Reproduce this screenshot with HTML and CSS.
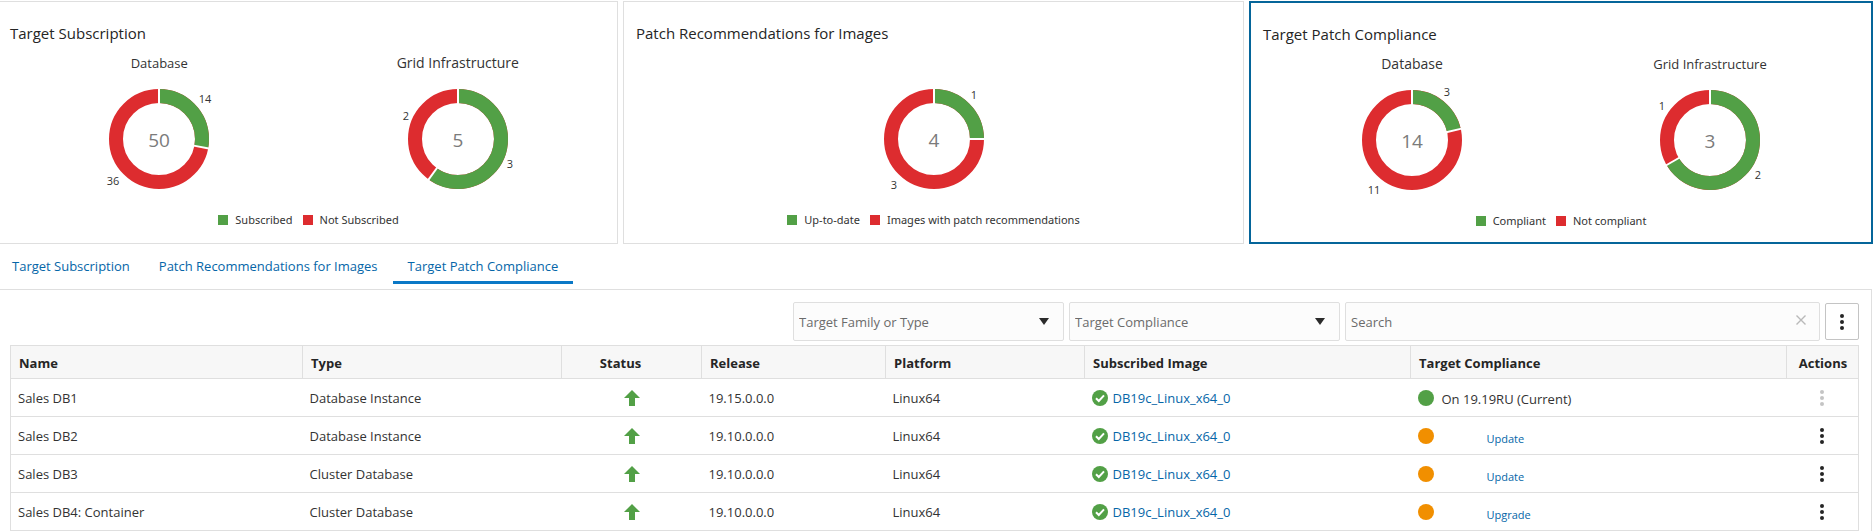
FILE: index.html
```html
<!DOCTYPE html>
<html lang="en">
<head>
    <meta charset="UTF-8">
    <meta name="viewport" content="width=device-width, initial-scale=1.0">
    <title>Target Patch Compliance</title>
    <link rel="stylesheet" href="styles.css">
</head>
<body>
    <!-- shared icons -->
    <svg class="sprite" aria-hidden="true">
        <symbol id="icon-up" viewBox="0 0 16 16">
            <path fill="#52a046" d="M8 0L16 8H11V16H5V8H0Z"/>
        </symbol>
        <symbol id="icon-check" viewBox="0 0 16 16">
            <circle cx="8" cy="8" r="8" fill="#52a046"/>
            <path fill="none" stroke="#fff" stroke-width="2" d="M4 8.2L6.8 11L12 5.4"/>
        </symbol>
        <symbol id="icon-dot" viewBox="0 0 16 16">
            <circle cx="8" cy="8" r="8" fill="currentColor"/>
        </symbol>
        <symbol id="icon-more" viewBox="0 0 4 16">
            <circle cx="2" cy="2" r="2" fill="currentColor"/>
            <circle cx="2" cy="8" r="2" fill="currentColor"/>
            <circle cx="2" cy="14" r="2" fill="currentColor"/>
        </symbol>
        <symbol id="icon-down" viewBox="0 0 10 7">
            <path fill="#2b2b2b" d="M0 0H10L5 7Z"/>
        </symbol>
        <symbol id="icon-close" viewBox="0 0 10 10">
            <path fill="none" stroke="#b9b9b9" stroke-width="1.4" d="M0.5 0.5L9.5 9.5M9.5 0.5L0.5 9.5"/>
        </symbol>
    </svg>

    <section class="cards">
        <article class="card first">
            <h2>Target Subscription</h2>
            <div class="charts">
                <div class="chart">
                    <h3>Database</h3>
                    <svg class="donut" viewBox="-70 -60 140 120">
                        <circle class="ring bad" r="43"/>
                        <circle class="ring good" r="43" pathLength="50" stroke-dasharray="14 36" transform="rotate(-90)"/>
                        <path class="cut" d="M0 -34V-52"/>
                        <path class="cut" d="M0 -34V-52" transform="rotate(100.8)"/>
                        <text class="total" x="0" y="8">50</text>
                        <text x="46" y="-36">14</text>
                        <text x="-46" y="46">36</text>
                    </svg>
                </div>
                <div class="chart">
                    <h3 class="large">Grid Infrastructure</h3>
                    <svg class="donut" viewBox="-70 -60 140 120">
                        <circle class="ring bad" r="43"/>
                        <circle class="ring good" r="43" pathLength="5" stroke-dasharray="3 2" transform="rotate(-90)"/>
                        <path class="cut" d="M0 -34V-52"/>
                        <path class="cut" d="M0 -34V-52" transform="rotate(216)"/>
                        <text class="total" x="0" y="8">5</text>
                        <text x="52" y="29">3</text>
                        <text x="-52" y="-19">2</text>
                    </svg>
                </div>
            </div>
            <ul class="legend">
                <li class="good">Subscribed</li>
                <li class="bad">Not Subscribed</li>
            </ul>
        </article>

        <article class="card">
            <h2>Patch Recommendations for Images</h2>
            <div class="charts">
                <div class="chart">
                    <svg class="donut" viewBox="-70 -60 140 120">
                        <circle class="ring bad" r="43"/>
                        <circle class="ring good" r="43" pathLength="4" stroke-dasharray="1 3" transform="rotate(-90)"/>
                        <path class="cut" d="M0 -34V-52"/>
                        <path class="cut" d="M0 -34V-52" transform="rotate(90)"/>
                        <text class="total" x="0" y="8">4</text>
                        <text x="40" y="-40">1</text>
                        <text x="-40" y="50">3</text>
                    </svg>
                </div>
            </div>
            <ul class="legend">
                <li class="good">Up-to-date</li>
                <li class="bad">Images with patch recommendations</li>
            </ul>
        </article>

        <article class="card selected">
            <h2>Target Patch Compliance</h2>
            <div class="charts">
                <div class="chart">
                    <h3 class="large">Database</h3>
                    <svg class="donut" viewBox="-70 -60 140 120">
                        <circle class="ring bad" r="43"/>
                        <circle class="ring good" r="43" pathLength="14" stroke-dasharray="3 11" transform="rotate(-90)"/>
                        <path class="cut" d="M0 -34V-52"/>
                        <path class="cut" d="M0 -34V-52" transform="rotate(77.1)"/>
                        <text class="total" x="0" y="8">14</text>
                        <text x="35" y="-44">3</text>
                        <text x="-38" y="54">11</text>
                    </svg>
                </div>
                <div class="chart">
                    <h3>Grid Infrastructure</h3>
                    <svg class="donut" viewBox="-70 -60 140 120">
                        <circle class="ring bad" r="43"/>
                        <circle class="ring good" r="43" pathLength="3" stroke-dasharray="2 1" transform="rotate(-90)"/>
                        <path class="cut" d="M0 -34V-52"/>
                        <path class="cut" d="M0 -34V-52" transform="rotate(240)"/>
                        <text class="total" x="0" y="8">3</text>
                        <text x="48" y="39">2</text>
                        <text x="-48" y="-30">1</text>
                    </svg>
                </div>
            </div>
            <ul class="legend">
                <li class="good">Compliant</li>
                <li class="bad">Not compliant</li>
            </ul>
        </article>
    </section>

    <nav class="tabs">
        <a href="#subscription">Target Subscription</a>
        <a href="#recommendations">Patch Recommendations for Images</a>
        <a href="#compliance" class="active">Target Patch Compliance</a>
    </nav>

    <main class="panel">
        <form class="toolbar">
            <div class="field">
                <select aria-label="Target Family or Type">
                    <option>Target Family or Type</option>
                </select>
                <svg class="caret"><use href="#icon-down"/></svg>
            </div>
            <div class="field">
                <select aria-label="Target Compliance">
                    <option>Target Compliance</option>
                </select>
                <svg class="caret"><use href="#icon-down"/></svg>
            </div>
            <div class="field search">
                <input type="text" placeholder="Search" aria-label="Search">
                <button type="button" class="clear" aria-label="Clear"><svg><use href="#icon-close"/></svg></button>
            </div>
            <button type="button" class="menu" aria-label="More actions"><svg class="more"><use href="#icon-more"/></svg></button>
        </form>

        <table class="targets">
            <colgroup>
                <col class="c-name"><col class="c-type"><col class="c-status"><col class="c-release">
                <col class="c-platform"><col class="c-image"><col class="c-compliance"><col class="c-actions">
            </colgroup>
            <thead>
                <tr>
                    <th>Name</th>
                    <th>Type</th>
                    <th class="status">Status</th>
                    <th>Release</th>
                    <th>Platform</th>
                    <th>Subscribed Image</th>
                    <th>Target Compliance</th>
                    <th class="actions">Actions</th>
                </tr>
            </thead>
            <tbody>
                <tr>
                    <td>Sales DB1</td>
                    <td>Database Instance</td>
                    <td class="center"><svg class="icon"><use href="#icon-up"/></svg></td>
                    <td>19.15.0.0.0</td>
                    <td>Linux64</td>
                    <td><div class="item"><svg class="icon"><use href="#icon-check"/></svg><a href="#image">DB19c_Linux_x64_0</a></div></td>
                    <td><div class="state"><svg class="icon ok"><use href="#icon-dot"/></svg><span>On 19.19RU (Current)</span></div></td>
                    <td class="center"><button class="row-menu" aria-label="Actions" disabled><svg class="more"><use href="#icon-more"/></svg></button></td>
                </tr>
                <tr>
                    <td>Sales DB2</td>
                    <td>Database Instance</td>
                    <td class="center"><svg class="icon"><use href="#icon-up"/></svg></td>
                    <td>19.10.0.0.0</td>
                    <td>Linux64</td>
                    <td><div class="item"><svg class="icon"><use href="#icon-check"/></svg><a href="#image">DB19c_Linux_x64_0</a></div></td>
                    <td><div class="state"><svg class="icon warn"><use href="#icon-dot"/></svg><a href="#update">Update</a></div></td>
                    <td class="center"><button class="row-menu" aria-label="Actions"><svg class="more"><use href="#icon-more"/></svg></button></td>
                </tr>
                <tr>
                    <td>Sales DB3</td>
                    <td>Cluster Database</td>
                    <td class="center"><svg class="icon"><use href="#icon-up"/></svg></td>
                    <td>19.10.0.0.0</td>
                    <td>Linux64</td>
                    <td><div class="item"><svg class="icon"><use href="#icon-check"/></svg><a href="#image">DB19c_Linux_x64_0</a></div></td>
                    <td><div class="state"><svg class="icon warn"><use href="#icon-dot"/></svg><a href="#update">Update</a></div></td>
                    <td class="center"><button class="row-menu" aria-label="Actions"><svg class="more"><use href="#icon-more"/></svg></button></td>
                </tr>
                <tr>
                    <td>Sales DB4: Container</td>
                    <td>Cluster Database</td>
                    <td class="center"><svg class="icon"><use href="#icon-up"/></svg></td>
                    <td>19.10.0.0.0</td>
                    <td>Linux64</td>
                    <td><div class="item"><svg class="icon"><use href="#icon-check"/></svg><a href="#image">DB19c_Linux_x64_0</a></div></td>
                    <td><div class="state"><svg class="icon warn"><use href="#icon-dot"/></svg><a href="#upgrade">Upgrade</a></div></td>
                    <td class="center"><button class="row-menu" aria-label="Actions"><svg class="more"><use href="#icon-more"/></svg></button></td>
                </tr>
            </tbody>
        </table>
    </main>
</body>
</html>
```

FILE: styles.css
```css
* {
    box-sizing: border-box;
}

body {
    margin: 0;
    padding-top: 1px;
    background: #fff;
    color: #333;
    font: 13px/20px "Open Sans", "Noto Sans", sans-serif;
}

a {
    color: #0566a8;
    text-decoration: none;
}

svg {
    display: block;
}

.sprite {
    display: none;
}

/* summary cards */
.cards {
    display: grid;
    grid-template-columns: 618fr 621fr 624fr;
    gap: 5px;
}

.card {
    display: flex;
    flex-direction: column;
    padding: 19px 12px 13px;
    border: 1px solid #dfdfdf;
}

.card.first {
    padding-left: 10px;
    padding-right: 10px;
    border-left: none;
}

.card.selected {
    padding-bottom: 11px;
    border: 2px solid #05659a;
}

.card h2 {
    margin: 0 0 8px;
    font-size: 15px;
    font-weight: normal;
    line-height: 24px;
    color: #252525;
}

.charts {
    display: flex;
    flex: 1;
    align-items: flex-end;
}

.chart {
    flex: 1;
    display: flex;
    flex-direction: column;
    align-items: center;
}

.chart h3 {
    margin: 0 0 6px;
    font-size: 13px;
    font-weight: normal;
    line-height: 20px;
}

.chart h3.large {
    font-size: 14px;
}

.donut {
    width: 140px;
    height: 120px;
}

.donut text {
    font-size: 11px;
    text-anchor: middle;
    fill: #333;
}

.donut .total {
    font-size: 19px;
    fill: #7b7b7b;
}

.ring {
    fill: none;
    stroke-width: 14;
}

.ring.good {
    stroke: #52a046;
}

.ring.bad {
    stroke: #dd2c2f;
}

.cut {
    stroke: #fff;
    stroke-width: 2;
}

.legend {
    display: flex;
    justify-content: center;
    gap: 10px;
    margin: 11px 0 0;
    padding: 0;
    list-style: none;
    font-family: "Noto Sans", "Open Sans", sans-serif;
    font-size: 11px;
}

.legend li {
    display: flex;
    align-items: center;
    gap: 7px;
}

.legend li::before {
    content: "";
    width: 10px;
    height: 10px;
    background: #52a046;
}

.legend li.bad::before {
    background: #dd2c2f;
}

/* tabs */
.tabs {
    display: flex;
    padding-top: 12px;
}

.tabs a {
    padding: 0 15px 5px;
    margin-bottom: 5px;
    border-bottom: 3px solid transparent;
}

.tabs a:first-child {
    padding-left: 12px;
    padding-right: 14px;
}

.tabs a.active {
    border-bottom-color: #0a78c6;
}

.panel {
    margin-right: 1px;
    padding: 12px 12px 0 10px;
    border-top: 1px solid #dfdfdf;
    border-right: 1px solid #dfdfdf;
}

/* filters */
.toolbar {
    display: flex;
    align-items: center;
    justify-content: flex-end;
    gap: 5px;
    margin-bottom: 4px;
}

.field {
    position: relative;
    width: 271px;
}

.field.search {
    width: 475px;
}

.field select,
.field input {
    display: block;
    width: 100%;
    height: 39px;
    padding: 0 5px;
    border: 1px solid #dfdfdf;
    border-radius: 2px;
    background: #fcfcfc;
    color: #6b6b6b;
    font: inherit;
    appearance: none;
}

.field input::placeholder {
    color: #6b6b6b;
}

.caret {
    position: absolute;
    right: 15px;
    top: 16px;
    width: 10px;
    height: 7px;
    pointer-events: none;
}

.clear {
    position: absolute;
    right: 9px;
    top: 8px;
    padding: 5px;
    border: none;
    background: none;
}

.clear svg {
    width: 10px;
    height: 10px;
}

.menu {
    display: flex;
    align-items: center;
    justify-content: center;
    width: 34px;
    height: 37px;
    padding: 0;
    border: 1px solid #c4c4c4;
    border-radius: 2px;
    background: #fff;
    color: #252525;
}

.more {
    width: 4px;
    height: 16px;
}

/* targets table */
.targets {
    width: 100%;
    table-layout: fixed;
    border-collapse: collapse;
    border: 1px solid #dfdfdf;
}

.c-name { width: 292px; }
.c-type { width: 259px; }
.c-status { width: 140px; }
.c-release { width: 184px; }
.c-platform { width: 199px; }
.c-image { width: 326px; }
.c-actions { width: 72px; }

.targets th {
    height: 33px;
    padding: 2px 7px 0 8px;
    border: 1px solid #dfdfdf;
    background: #f7f7f7;
    color: #252525;
    font-weight: bold;
    text-align: left;
}

.targets th.status {
    padding-right: 30px;
    text-align: center;
}

.targets th.actions {
    text-align: center;
}

.targets td {
    height: 38px;
    padding: 0 7px;
    border-bottom: 1px solid #dfdfdf;
}

.targets td.center .icon {
    margin: 0 auto;
}

.icon {
    flex: none;
    width: 16px;
    height: 16px;
}

.icon.ok {
    color: #52a046;
}

.icon.warn {
    color: #f18f00;
}

.item {
    display: flex;
    align-items: center;
    gap: 5px;
}

.state {
    display: flex;
    align-items: center;
    gap: 8px;
}

.state span {
    padding-top: 2px;
}

.state a {
    margin-left: 45px;
    padding-top: 6px;
    font-size: 11px;
}

.row-menu {
    display: block;
    margin: 0 auto;
    padding: 0 6px;
    border: none;
    background: none;
    color: #252525;
}

.row-menu:disabled {
    color: #c4c4c4;
}
```
